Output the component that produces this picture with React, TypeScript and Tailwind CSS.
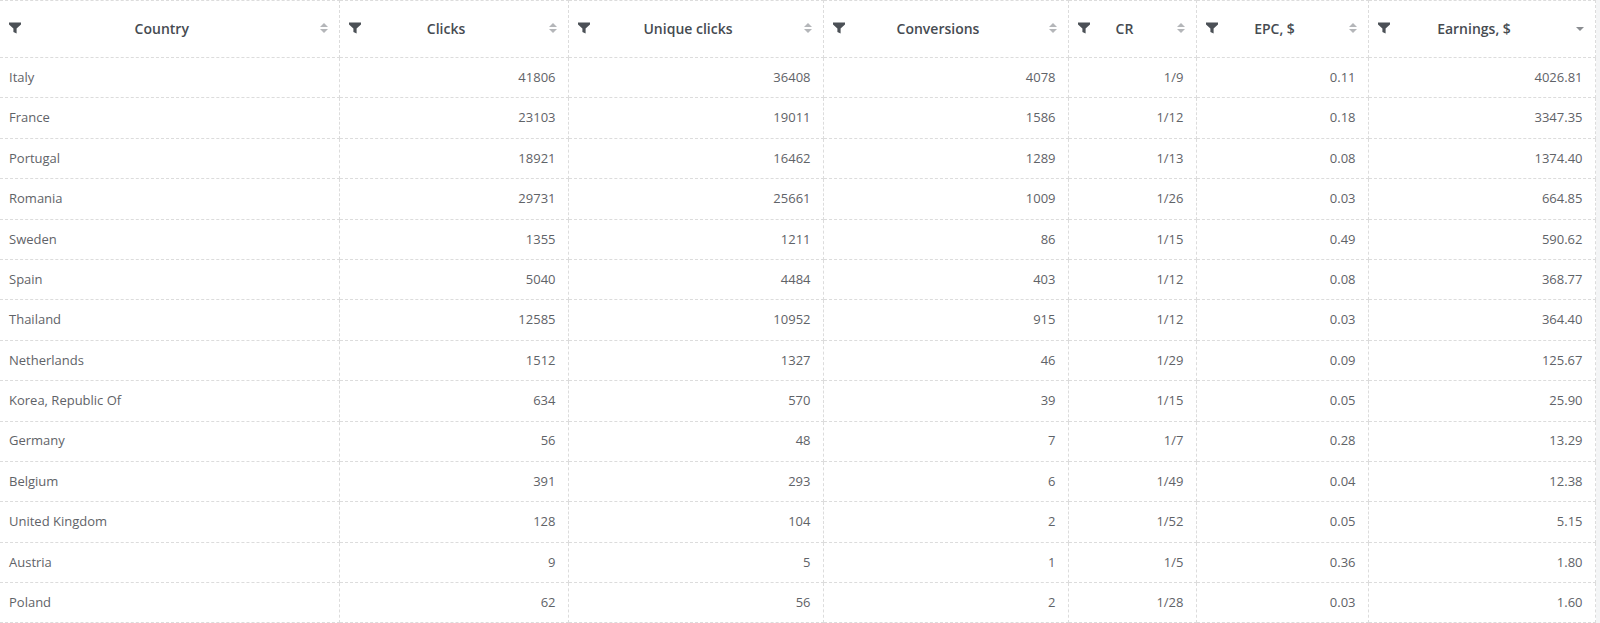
import React from 'react';

type Row = [string, string, string, string, string, string, string];

const rows: Row[] = [
  ['Italy', '41806', '36408', '4078', '1/9', '0.11', '4026.81'],
  ['France', '23103', '19011', '1586', '1/12', '0.18', '3347.35'],
  ['Portugal', '18921', '16462', '1289', '1/13', '0.08', '1374.40'],
  ['Romania', '29731', '25661', '1009', '1/26', '0.03', '664.85'],
  ['Sweden', '1355', '1211', '86', '1/15', '0.49', '590.62'],
  ['Spain', '5040', '4484', '403', '1/12', '0.08', '368.77'],
  ['Thailand', '12585', '10952', '915', '1/12', '0.03', '364.40'],
  ['Netherlands', '1512', '1327', '46', '1/29', '0.09', '125.67'],
  ['Korea, Republic Of', '634', '570', '39', '1/15', '0.05', '25.90'],
  ['Germany', '56', '48', '7', '1/7', '0.28', '13.29'],
  ['Belgium', '391', '293', '6', '1/49', '0.04', '12.38'],
  ['United Kingdom', '128', '104', '2', '1/52', '0.05', '5.15'],
  ['Austria', '9', '5', '1', '1/5', '0.36', '1.80'],
  ['Poland', '62', '56', '2', '1/28', '0.03', '1.60'],
];

const columns = [
  { label: 'Country', width: 'w-[339px]' },
  { label: 'Clicks', width: 'w-[229px]' },
  { label: 'Unique clicks', width: 'w-[255px]' },
  { label: 'Conversions', width: 'w-[245px]' },
  { label: 'CR', width: 'w-[128px]' },
  { label: 'EPC, $', width: 'w-[172px]' },
  { label: 'Earnings, $', width: 'w-[227px]' },
];

const FilterIcon = () => (
  <svg width="12" height="12" viewBox="0 0 12 12" className="shrink-0">
    <path d="M0 0.5 H12 V2.6 L7.6 6.4 V11.5 L4.4 10 V6.4 L0 2.6 Z" fill="#4b5056" />
  </svg>
);

const SortIcon = ({ desc }: { desc?: boolean }) =>
  desc ? (
    <svg width="10" height="12" viewBox="0 0 10 12" className="shrink-0">
      <path d="M1 5 H9 L5 9 Z" fill="#8a8d91" />
    </svg>
  ) : (
    <svg width="10" height="12" viewBox="0 0 10 12" className="shrink-0">
      <path d="M1 5 H9 L5 1 Z" fill="#b4b6b9" />
      <path d="M1 7 H9 L5 11 Z" fill="#b4b6b9" />
    </svg>
  );

export default function App() {
  return (
    <div className="flex w-[1600px] h-[623px] overflow-hidden bg-white font-['Open_Sans',sans-serif]">
      <table className="w-[1595px] table-fixed border-collapse">
        <colgroup>
          {columns.map((c) => (
            <col key={c.label} className={c.width} />
          ))}
        </colgroup>
        <thead>
          <tr className="h-[57px]">
            {columns.map((c, i) => (
              <th
                key={c.label}
                className={`border-dashed border-[#dcdcdc] border-t border-b p-0 ${i === 0 ? 'border-r' : 'border-x'}`}
              >
                <div className="flex items-center pl-[9px] pr-[10px] pb-[2px]">
                  <FilterIcon />
                  <span className="flex-1 pr-[16px] text-center text-[14px] font-semibold text-[#464b51]">
                    {c.label}
                  </span>
                  <SortIcon desc={i === columns.length - 1} />
                </div>
              </th>
            ))}
          </tr>
        </thead>
        <tbody>
          {rows.map((r) => (
            <tr key={r[0]} className="h-[40.4px]">
              {r.map((v, i) => (
                <td
                  key={i}
                  className={`border-dashed border-[#dcdcdc] border-b p-0 text-[13px] text-[#5f6368] ${
                    i === 0 ? 'border-r pl-[9px] text-left' : 'border-x pr-[12px] text-right'
                  }`}
                >
                  {v}
                </td>
              ))}
            </tr>
          ))}
        </tbody>
      </table>
      <div className="w-[5px] shrink-0 bg-[#f4f5f6]" />
    </div>
  );
}
